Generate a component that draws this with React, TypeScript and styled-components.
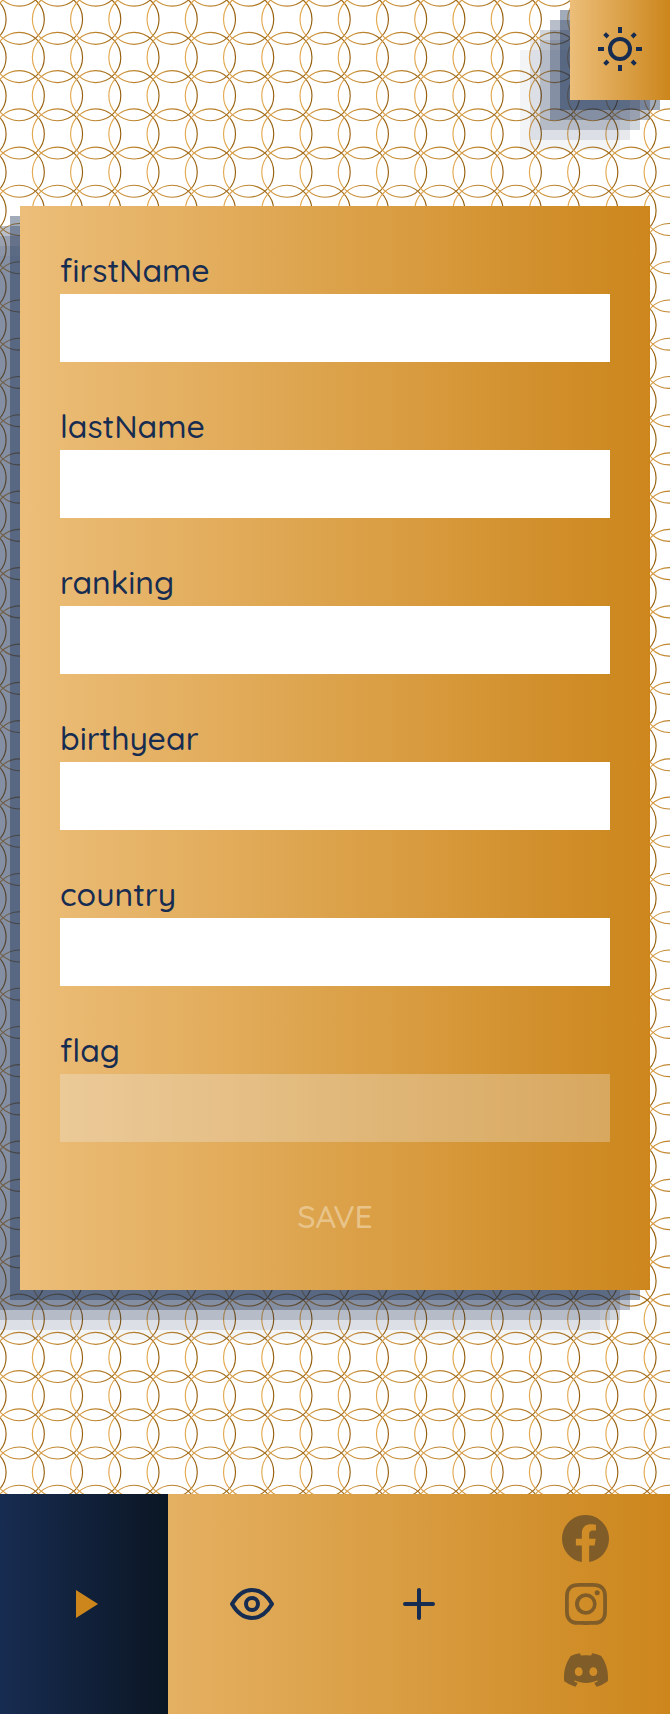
import React from 'react';
import styled, { createGlobalStyle } from 'styled-components';
import { BsFacebook, BsInstagram, BsDiscord } from 'react-icons/bs';

const navy = '#172c51';
const gold = 'linear-gradient(to right, #ecbe79, #cc861c)';

const GlobalStyle = createGlobalStyle`
  * { box-sizing: border-box; }
  body { margin: 0; background: #fff; }
`;

const steppedShadow = [0.4, 0.3, 0.2, 0.1, 0.05]
  .map((alpha, i) => `${-10 * (i + 1)}px ${10 * (i + 1)}px rgba(23, 44, 81, ${alpha})`)
  .join(', ');

const Page = styled.div`
  position: relative;
  isolation: isolate;
  display: flex;
  flex-direction: column;
  height: 1714px;
  overflow: hidden;
  font-family: Quicksand, Lato, sans-serif;
  color: ${navy};
`;

const Backdrop = styled.svg`
  position: absolute;
  inset: 0;
  width: 100%;
  height: 100%;
  z-index: -1;
`;

const Header = styled.header`
  display: flex;
  justify-content: flex-end;
  height: 206px;
`;

const ThemeButton = styled.button`
  display: flex;
  align-items: center;
  justify-content: center;
  width: 100px;
  height: 100px;
  padding: 0 0 2px;
  border: 0;
  color: ${navy};
  background: ${gold};
  box-shadow: ${steppedShadow};
`;

const Form = styled.form`
  display: flex;
  flex-direction: column;
  height: 1084px;
  margin: 0 20px;
  padding: 40px 40px 0;
  background: ${gold};
  box-shadow: ${steppedShadow};
`;

const Field = styled.label`
  display: flex;
  flex-direction: column;
  height: 156px;
`;

const Caption = styled.span`
  height: 48px;
  line-height: 48px;
  font-size: 32px;
  font-weight: 500;
  white-space: nowrap;
`;

const Input = styled.input`
  width: 100%;
  height: 68px;
  border: 0;
  padding: 0 20px;
  border-radius: 0;
  background: #fff;
  &:disabled { background: rgba(239, 239, 239, 0.3); }
`;

const Save = styled.button`
  align-self: center;
  margin-top: 14px;
  padding: 0;
  border: 0;
  background: none;
  font: 500 32px/40px Quicksand, Lato, sans-serif;
  color: #e9c48a;
`;

const Nav = styled.nav`
  display: grid;
  grid-template-columns: 168px 168px 165px 1fr;
  height: 220px;
  margin-top: auto;
  background: ${gold};
`;

const NavItem = styled.a<{ $active?: boolean }>`
  display: flex;
  align-items: center;
  justify-content: center;
  background: ${(p) => (p.$active ? 'linear-gradient(to right, #172c51, #0b1624)' : 'none')};
`;

const Social = styled.div`
  display: grid;
  grid-template-rows: repeat(3, 66px);
  align-content: center;
  place-items: center;
  color: #7f5c28;
`;

const Icon = styled.svg`
  display: block;
  width: 48px;
  height: 48px;
  fill: none;
  stroke: ${navy};
  stroke-width: 4;
`;

const CELL = 38.235;

function Rings() {
  const rings: React.ReactElement[] = [];
  for (let row = -1; row < 46; row++) {
    for (let col = -1; col < 19; col++) {
      rings.push(
        <circle
          key={`${row}:${col}`}
          cx={(col + 0.5) * CELL + 0.1}
          cy={(row + 0.5) * CELL + 0.1}
          r="25.1"
        />,
      );
    }
  }
  return (
    <Backdrop aria-hidden>
      <defs>
        <linearGradient id="ringStroke">
          <stop offset="0" stopColor="#e3a951" />
          <stop offset="1" stopColor="#965f0c" />
        </linearGradient>
      </defs>
      <g fill="none" stroke="url(#ringStroke)" strokeWidth="1.15">{rings}</g>
    </Backdrop>
  );
}

const SunIcon = () => (
  <Icon viewBox="-24 -24 48 48">
    <circle r="10" />
    <path d="M0-22v6M0 16v6M-22 0h6M16 0h6M-15.4-15.4l3.4 3.4M15.4-15.4l-3.4 3.4M-15.4 15.4l3.4-3.4M15.4 15.4l-3.4-3.4" />
  </Icon>
);

const EyeIcon = () => (
  <Icon viewBox="-24 -24 48 48" strokeLinejoin="round">
    <path d="M-20 0C-15-8.5-8-14 0-14S15-8.5 20 0C15 8.5 8 14 0 14S-15 8.5-20 0Z" />
    <circle r="6" />
  </Icon>
);

const PlusIcon = () => (
  <Icon viewBox="-24 -24 48 48" strokeLinecap="round">
    <path d="M0-14v28M-14 0h28" />
  </Icon>
);

const PlayIcon = () => (
  <Icon viewBox="-24 -24 48 48">
    <path d="M-8-14v28l22-14z" fill="#cc861c" stroke="none" />
  </Icon>
);

const fields = ['firstName', 'lastName', 'ranking', 'birthyear', 'country', 'flag'];

export default function App() {
  return (
    <Page>
      <GlobalStyle />
      <Rings />
      <Header>
        <ThemeButton type="button" aria-label="theme"><SunIcon /></ThemeButton>
      </Header>
      <Form>
        {fields.map((name) => (
          <Field key={name}>
            <Caption>{name}</Caption>
            <Input name={name} disabled={name === 'flag'} />
          </Field>
        ))}
        <Save type="button">SAVE</Save>
      </Form>
      <Nav>
        <NavItem $active><PlayIcon /></NavItem>
        <NavItem><EyeIcon /></NavItem>
        <NavItem><PlusIcon /></NavItem>
        <Social>
          <BsFacebook size={47} />
          <BsInstagram size={42} />
          <BsDiscord size={44} />
        </Social>
      </Nav>
    </Page>
  );
}
